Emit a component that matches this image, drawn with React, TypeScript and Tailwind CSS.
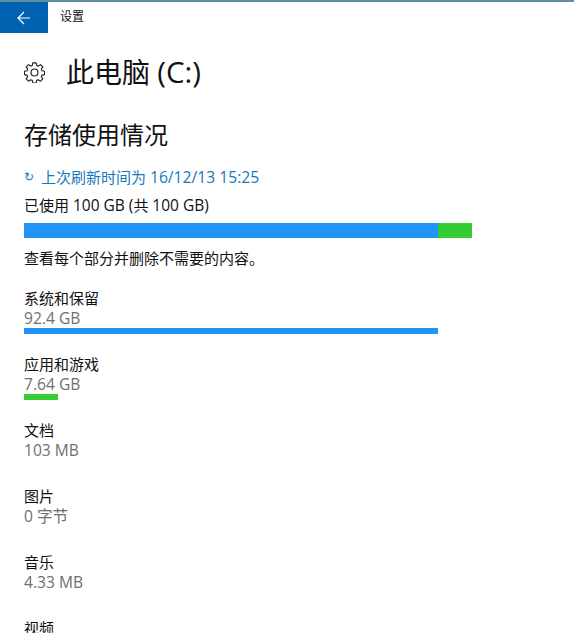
const font = { fontFamily: '"Open Sans", "Noto Sans CJK SC", sans-serif' };

function Gear() {
  return (
    <svg width="21" height="21" viewBox="0 0 20 20" fill="none" stroke="#222" strokeWidth="1.1">
      <circle cx="10" cy="10" r="3.3" />
      <path
        d="M8.400 0.800h3.200l.5 2.500 1.500.6 2.100-1.400 2.200 2.200-1.400 2.100.6 1.500 2.500.5v3.200l-2.500.5-.6 1.500 1.400 2.100-2.200 2.200-2.100-1.400-1.500.6-.5 2.500H8.400l-.5-2.500-1.500-.6-2.100 1.400-2.200-2.200 1.400-2.100-.6-1.500-2.500-.5V8.800l2.500-.5.6-1.500-1.400-2.100 2.200-2.200 2.100 1.400 1.500-.6z"
        strokeLinejoin="round"
      />
    </svg>
  );
}

function Row({ label, value, bar, color }: { label: string; value: string; bar?: number; color?: string }) {
  return (
    <div className="h-[66px]">
      <div className="h-5 text-[15px] leading-5 text-[#111]">{label}</div>
      <div className="h-5 text-[15.6px] leading-5 text-[#6f6f6f]">{value}</div>
      {bar ? <div className="h-[6px]" style={{ width: bar, background: color }} /> : null}
    </div>
  );
}

export default function App() {
  return (
    <div className="h-[633px] w-[574px] overflow-hidden bg-white" style={font}>
      <div className="h-[2px] bg-[#5f8ea3]" />
      <div className="flex h-[31px] items-center">
        <div className="flex h-full w-12 items-center justify-center bg-[#0063b1]">
          <svg width="14" height="14" viewBox="0 0 14 14" fill="none" stroke="#fff" strokeWidth="1.2">
            <path d="M13 7H1.500M7 1 1 7l6 6" />
          </svg>
        </div>
        <div className="mb-[2px] ml-3 text-xs text-[#111]">设置</div>
      </div>
      <div className="ml-6 mt-[16px] flex h-[46px] items-center">
        <Gear />
        <div className="ml-[21px] text-[28px] leading-[46px] text-[#111]">
          此电脑 <span className="text-[29.5px]">(C:)</span>
        </div>
      </div>
      <div className="ml-6 w-[448px]">
        <div className="mt-[24px] text-2xl leading-8 text-[#111]">存储使用情况</div>
        <div className="mt-[16px] flex h-5 items-center text-[15px] leading-5 text-[#1678bd]">
          <span className="w-[17px] text-[12px]">↻</span>
          <span>
            上次刷新时间为 <span className="text-[15.7px]">16/12/13 15:25</span>
          </span>
        </div>
        <div className="mt-2 h-5 text-[15px] leading-5 text-[#111]">
          已使用 <span className="text-[15.5px]">100 GB (</span>共 <span className="text-[15.5px]">100 GB)</span>
        </div>
        <div className="mt-[8px] flex h-[15px]">
          <div className="w-[414px] bg-[#2394f7]" />
          <div className="flex-1 bg-[#33cc33]" />
        </div>
        <div className="mt-[10px] h-5 text-[15px] leading-5 text-[#111]">查看每个部分并删除不需要的内容。</div>
        <div className="mt-[20px]">
          <Row label="系统和保留" value="92.4 GB" bar={414} color="#2394f7" />
          <Row label="应用和游戏" value="7.64 GB" bar={34} color="#33cc33" />
          <Row label="文档" value="103 MB" />
          <Row label="图片" value="0 字节" />
          <Row label="音乐" value="4.33 MB" />
          <Row label="视频" value="" />
        </div>
      </div>
    </div>
  );
}
